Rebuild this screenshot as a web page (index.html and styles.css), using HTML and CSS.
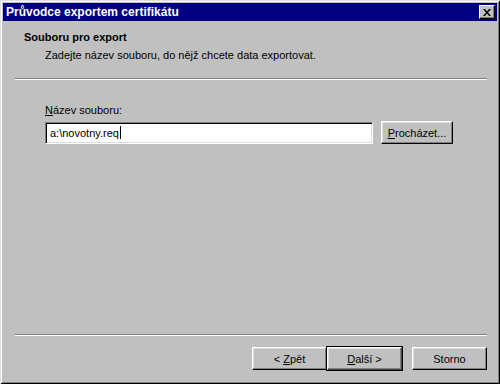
FILE: index.html
```html
<!DOCTYPE html>
<html lang="cs">
  <head>
    <meta charset="UTF-8" />
    <meta name="viewport" content="width=device-width, initial-scale=1.0" />
    <title>Průvodce exportem certifikátu</title>
    <link rel="stylesheet" href="styles.css">
  </head>
  <body>
    <div class="window">
      <div class="titlebar">
        <span class="title">Průvodce exportem certifikátu</span>
        <button class="close" aria-label="Zavřít">
          <svg width="8" height="7" viewBox="0 0 8 7">
            <path d="M0 0h2l2 2.5L6 0h2L5 3.5 8 7H6L4 4.5 2 7H0l3-3.5z" fill="#000" />
          </svg>
        </button>
      </div>

      <div class="header">
        <div class="heading">Souboru pro export</div>
        <div class="subheading">Zadejte název souboru, do nějž chcete data exportovat.</div>
      </div>

      <div class="sep"></div>

      <div class="content">
        <label class="label" for="file_name"><u>N</u>ázev souboru:</label>
        <div class="row">
          <div class="input" id="file_name">a:\novotny.req<span class="caret"></span></div>
          <button class="btn browse"><u>P</u>rocházet...</button>
        </div>
      </div>

      <div class="sep"></div>

      <div class="footer">
        <button class="btn">&lt; <u>Z</u>pět</button>
        <button class="btn default"><u>D</u>alší &gt;</button>
        <button class="btn cancel">Storno</button>
      </div>
    </div>
  </body>
</html>
```

FILE: styles.css
```css
body {
  margin: 0;
  background-color: rgb(192, 192, 192);
  font-family: "Liberation Sans", Arial, sans-serif;
  font-size: 11px;
  color: rgb(0, 0, 0);
}

.window {
  width: 500px;
  height: 384px;
  box-sizing: border-box;
  padding: 3px;
  display: flex;
  flex-direction: column;
  background-color: rgb(192, 192, 192);
  box-shadow: inset 1px 1px rgb(223, 223, 223), inset -1px -1px rgb(0, 0, 0),
    inset 2px 2px rgb(255, 255, 255), inset -2px -2px rgb(128, 128, 128);
}

.titlebar {
  height: 18px;
  flex-shrink: 0;
  background-color: rgb(0, 0, 128);
  display: flex;
  align-items: center;
  justify-content: space-between;
  padding: 0 2px 0 3px;
}

.title {
  color: rgb(255, 255, 255);
  font-weight: bold;
  font-size: 12px;
}

.close {
  width: 16px;
  height: 14px;
  padding: 0;
  display: flex;
  align-items: center;
  justify-content: center;
  background-color: rgb(192, 192, 192);
  border: 1px solid;
  border-color: rgb(255, 255, 255) rgb(0, 0, 0) rgb(0, 0, 0) rgb(255, 255, 255);
  box-shadow: inset -1px -1px rgb(128, 128, 128);
}

.header {
  height: 57px;
  flex-shrink: 0;
  box-sizing: border-box;
  padding: 10px 0 0 21px;
}

.heading {
  font-weight: bold;
  line-height: 13px;
}

.subheading {
  line-height: 13px;
  margin-top: 5px;
  padding-left: 21px;
}

.sep {
  height: 0;
  margin: 0 10px 0 12px;
  border-top: 1px solid rgb(128, 128, 128);
  border-bottom: 1px solid rgb(255, 255, 255);
  flex-shrink: 0;
}

.content {
  flex: 1;
  padding: 24px 0 0 42px;
}

.label {
  display: block;
  line-height: 13px;
  margin-bottom: 4px;
}

.row {
  display: flex;
  align-items: center;
  gap: 8px;
}

.input {
  width: 328px;
  height: 22px;
  box-sizing: border-box;
  padding: 0 4px;
  display: flex;
  align-items: center;
  background-color: rgb(255, 255, 255);
  border: 1px solid;
  border-color: rgb(128, 128, 128) rgb(255, 255, 255) rgb(255, 255, 255) rgb(128, 128, 128);
  box-shadow: inset 1px 1px rgb(0, 0, 0), inset -1px -1px rgb(223, 223, 223);
}

.caret {
  display: inline-block;
  width: 1px;
  height: 13px;
  background-color: rgb(0, 0, 0);
  margin-left: 1px;
}

.btn {
  width: 75px;
  height: 23px;
  padding: 0;
  font-family: inherit;
  font-size: 11px;
  color: rgb(0, 0, 0);
  background-color: rgb(192, 192, 192);
  border: 1px solid;
  border-color: rgb(255, 255, 255) rgb(0, 0, 0) rgb(0, 0, 0) rgb(255, 255, 255);
  box-shadow: inset -1px -1px rgb(128, 128, 128), inset 1px 1px rgb(223, 223, 223);
}

.browse {
  width: 72px;
}

.footer {
  flex-shrink: 0;
  height: 45px;
  box-sizing: border-box;
  padding: 11px 10px 0 0;
  display: flex;
  justify-content: flex-end;
  align-items: flex-start;
}

.default {
  outline: 1px solid rgb(0, 0, 0);
  outline-offset: 0;
  border-color: rgb(255, 255, 255) rgb(64, 64, 64) rgb(64, 64, 64) rgb(255, 255, 255);
}

.cancel {
  margin-left: 10px;
}
```
